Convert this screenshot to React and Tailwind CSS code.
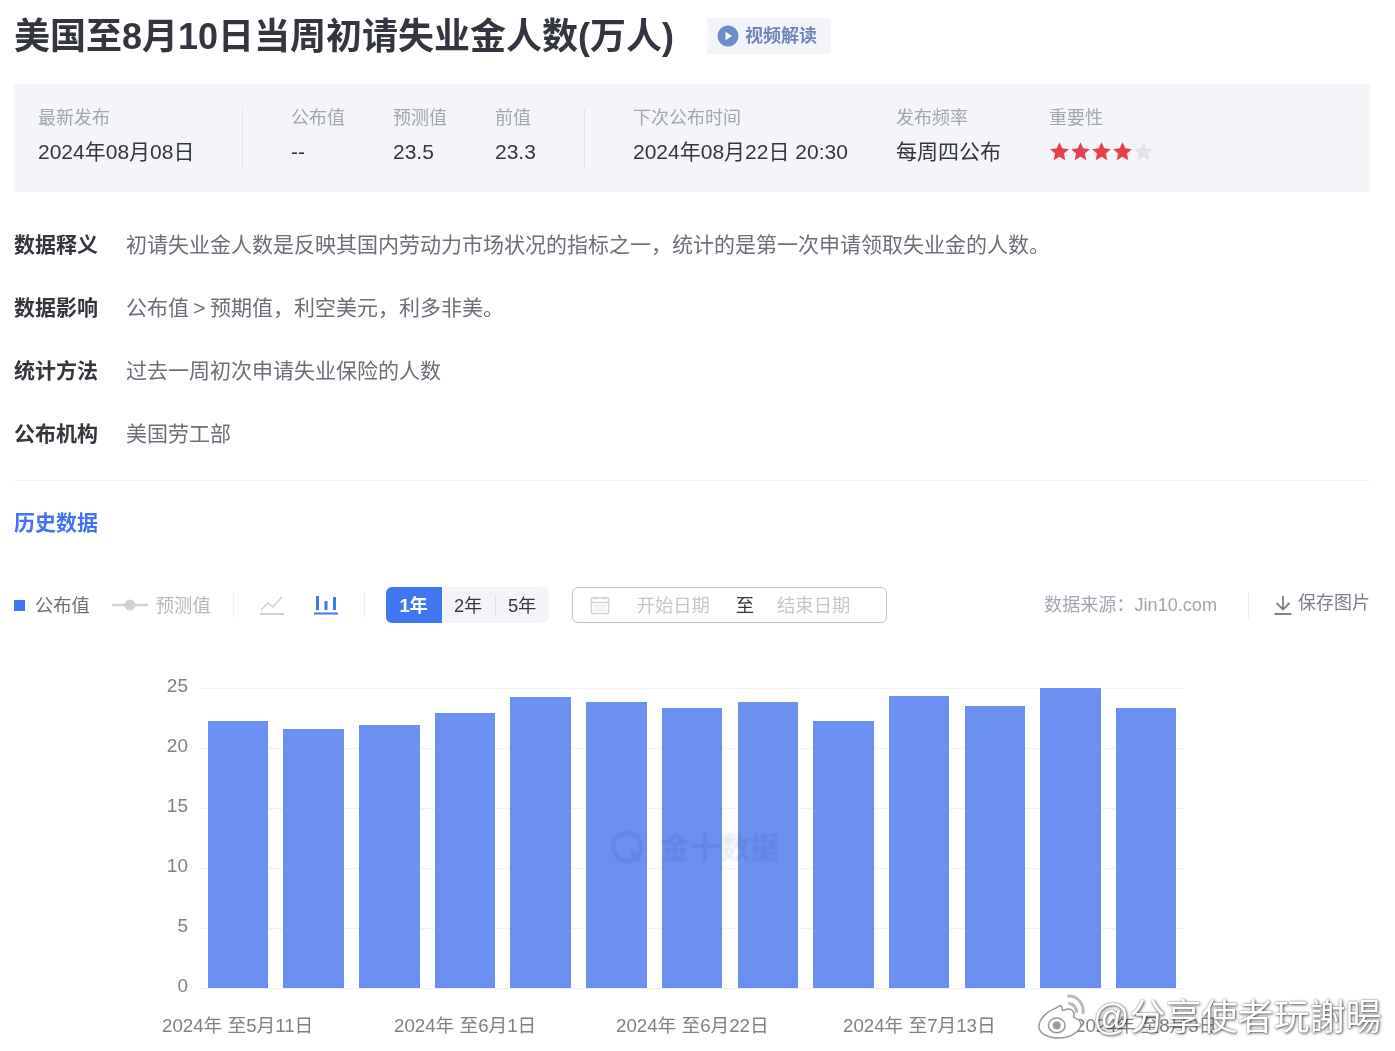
const sans = "font-['Liberation_Sans','Noto_Sans_CJK_SC',sans-serif]";

const Star = ({ on }) => (
  <svg viewBox="0 0 24 24" className="w-[21px] h-[21px]">
    <path d="M12 1.500l3.200 6.900 7.500.9-5.600 5.100 1.500 7.500L12 18.100l-6.600 3.800 1.500-7.500L1.300 9.300l7.500-.9z" fill={on ? "#e8404f" : "#e3e4e8"} />
  </svg>
);

const Stat = ({ label, value, className, children }) => (
  <div className={`pb-[5px] ${className}`}>
    <div className="text-[18px] leading-[26px] text-[#a2a6b0]">{label}</div>
    <div className="mt-[6px] h-[30px] text-[21px] leading-[30px] text-[#33363d]">{children || value}</div>
  </div>
);

const Row = ({ title, text }) => (
  <div className="flex h-[63px] items-center text-[21px] leading-[30px]">
    <div className="w-[112px] font-bold text-[#33363d]">{title}</div>
    <div className="text-[#6b6f78] [word-spacing:-1.5px]">{text}</div>
  </div>
);

const bars = [267, 259, 263, 275, 291, 286, 280, 286, 267, 292, 282, 300, 280];
const yLabels = [25, 20, 15, 10, 5, 0];
const xLabels = [
  ["2024年 至5月11日", "left-[148px]"],
  ["2024年 至6月1日", "left-[380px]"],
  ["2024年 至6月22日", "left-[602px]"],
  ["2024年 至7月13日", "left-[829px]"],
  ["2024年 至8月3日", "left-[1061px]"],
];

export default function App() {
  return (
    <div className={`${sans} w-[1395px] h-[1051px] overflow-hidden bg-white pl-[14px] pr-[25px] relative`}>
      <div className="flex h-[84px] items-start pt-[15px]">
        <h1 className="text-[36px] leading-[44px] font-bold text-[#33363f]">美国至8月10日当周初请失业金人数(万人)</h1>
        <div className="ml-[33px] mt-[3px] flex h-[36px] w-[124px] items-center gap-[6px] rounded-[2px] bg-[#f2f4f9] pl-[10px]">
          <svg viewBox="0 0 22 22" className="w-[22px] h-[22px]">
            <circle cx="11" cy="11" r="10.500" fill="#6f8cca" />
            <path d="M8.500 6.800l6.500 4.200-6.500 4.200z" fill="#fff" />
          </svg>
          <span className="mt-[1px] text-[18px] font-bold text-[#6f84b8]">视频解读</span>
        </div>
      </div>

      <div className="flex h-[108px] items-center bg-[#f4f5f8] pl-[24px] rounded-[2px]">
        <Stat label="最新发布" value="2024年08月08日" className="w-[204px]" />
        <div className="h-[60px] w-px bg-[#e4e6ea]" />
        <Stat label="公布值" value="--" className="w-[102px] ml-[48px]" />
        <Stat label="预测值" value="23.5" className="w-[102px]" />
        <Stat label="前值" value="23.3" className="w-[89px]" />
        <div className="h-[60px] w-px bg-[#e4e6ea]" />
        <Stat label="下次公布时间" value="2024年08月22日 20:30" className="w-[263px] ml-[48px]" />
        <Stat label="发布频率" value="每周四公布" className="w-[153px]" />
        <Stat label="重要性" className="ml-0">
          <div className="flex h-full items-center">
            <Star on /><Star on /><Star on /><Star on /><Star />
          </div>
        </Stat>
      </div>

      <div className="mt-[21px]">
        <Row title="数据释义" text="初请失业金人数是反映其国内劳动力市场状况的指标之一，统计的是第一次申请领取失业金的人数。" />
        <Row title="数据影响" text="公布值 > 预期值，利空美元，利多非美。" />
        <Row title="统计方法" text="过去一周初次申请失业保险的人数" />
        <Row title="公布机构" text="美国劳工部" />
      </div>

      <div className="mt-[15px] h-px bg-[#eff0f2]" />
      <div className="mt-[27px] text-[21px] leading-[30px] font-bold text-[#4074f4]">历史数据</div>

      <div className="mt-[49px] flex h-[36px] items-center text-[18.3px]">
        <span className="h-[11px] w-[11px] bg-[#3f76f3]" />
        <span className="ml-[10px] mt-[2px] text-[#6b6f78]">公布值</span>
        <svg viewBox="0 0 36 12" className="ml-[22px] w-[36px] h-[12px]">
          <path d="M0 6h36" stroke="#cfd1d6" strokeWidth="2.500" />
          <circle cx="18" cy="6" r="5.500" fill="#cfd1d6" />
        </svg>
        <span className="ml-[8px] mt-[2px] text-[#b4b7be]">预测值</span>
        <div className="ml-[22px] h-[26px] w-px bg-[#eceef1]" />
        <svg viewBox="0 0 24 20" className="ml-[26px] w-[24px] h-[20px]" fill="none" stroke="#cfd1d6" strokeWidth="1.600">
          <path d="M0 19h24" strokeWidth="2" />
          <path d="M1 15l7-7 5 4 9-10" />
        </svg>
        <svg viewBox="0 0 24 20" className="ml-[30px] w-[24px] h-[20px]" fill="#3f76f3">
          <rect x="2" y="1" width="3" height="14" />
          <rect x="10.500" y="6" width="3" height="9" />
          <rect x="19" y="2" width="3" height="13" />
          <rect x="0" y="17.500" width="24" height="2" />
        </svg>
        <div className="ml-[26px] h-[26px] w-px bg-[#eceef1]" />
        <div className="ml-[21px] flex h-[36px] items-center overflow-hidden rounded-[6px] bg-[#f2f4f8] text-[#33363d]">
          <div className="flex h-full w-[56px] items-center justify-center bg-[#3f76f3] pt-[2px] font-bold text-white">1年</div>
          <div className="flex h-full w-[53px] items-center justify-center pt-[2px]">2年</div>
          <div className="h-[20px] w-px bg-[#e1e3e8]" />
          <div className="flex h-full w-[53px] items-center justify-center pt-[2px]">5年</div>
        </div>
        <div className="ml-[23px] flex h-[36px] w-[315px] items-center rounded-[6px] border border-[#bfc3cb]">
          <svg viewBox="0 0 20 20" className="ml-[17px] w-[20px] h-[20px]" fill="none" stroke="#cfd1d6" strokeWidth="1.500">
            <rect x="1.500" y="3" width="17" height="15.500" rx="1" />
            <path d="M1.500 7.500h17M5.500 1v3.500M14.500 1v3.500" />
            <path d="M4.500 10.500h11M4.500 13h11M4.500 15.500h11" strokeDasharray="2 1" strokeWidth="1.200" />
          </svg>
          <span className="ml-[27px] mt-[2px] text-[#c4c7cd]">开始日期</span>
          <span className="ml-[26px] mt-[2px] text-[#33363d]">至</span>
          <span className="ml-[23px] mt-[2px] text-[#c4c7cd]">结束日期</span>
        </div>
        <span className="ml-auto mt-[2px] text-[18.1px] text-[#a2a6b0]">数据来源：Jin10.com</span>
        <div className="ml-[31px] h-[26px] w-px bg-[#e9eaee]" />
        <svg viewBox="0 0 18 20" className="ml-[25px] w-[18px] h-[20px]" fill="none" stroke="#7c8089" strokeWidth="1.800">
          <path d="M9 1v13M2.500 8L9 14.500 15.500 8M0.500 19h17" />
        </svg>
        <span className="ml-[6px] -mt-[3px] text-[18px] text-[#7c8089]">保存图片</span>
      </div>

      <div className="relative mt-[47px] h-[400px]">
        {/* y axis labels */}
        <div className="absolute left-0 top-[0] h-[300px] w-[1170px]">
          {yLabels.map((v, i) => (
            <div key={v} className="flex h-0 items-center" style={{ marginTop: i === 0 ? 18 : 60 }}>
              <span className="-mt-[4px] w-[174px] text-right text-[19px] text-[#7c8089]">{v}</span>
              <div className="ml-[12px] h-px w-[984px] bg-[#f0f1f3]" />
            </div>
          ))}
        </div>
        {/* bars */}
        <div className="absolute left-[193.7px] top-[18px] flex h-[300px] items-end gap-[15.2px]">
          {bars.map((h, i) => (
            <div key={i} className="w-[60.5px] bg-[#6a90f2]" style={{ height: h }} />
          ))}
        </div>
        {/* x labels */}
        {xLabels.map(([t, c]) => (
          <span key={t} className={`absolute top-[343px] text-[18.7px] leading-[26px] whitespace-nowrap text-[#7c8089] ${c}`}>{t}</span>
        ))}
      </div>

      {/* chart watermark */}
      <div className="absolute left-[610px] top-[830px] flex items-center gap-[14px] text-[30px] font-bold leading-[36px] text-[#e9ecf2] mix-blend-multiply blur-[1px]">
        <svg viewBox="0 0 36 36" className="w-[36px] h-[36px]" fill="none" stroke="#e9ecf2" strokeWidth="4">
          <circle cx="17" cy="17" r="14" />
          <path d="M20 21l10 10" />
        </svg>
        <span>金十数据</span>
      </div>

      {/* weibo watermark */}
      <div className="absolute left-[1036px] top-[994px] flex items-center gap-[5px] text-[36px] leading-[48px] whitespace-nowrap text-white [text-shadow:1px_1px_3px_rgba(0,0,0,0.65),0_0_2px_rgba(0,0,0,0.45)]">
        <svg viewBox="0 0 48 44" className="-mt-[5px] w-[52px] h-[46px]" fill="#fff" stroke="#9a9a9a" strokeWidth="1.500">
          <path d="M19 14c-10 4-17 11-17 18 0 7 9 11 19 11 11 0 21-6 21-13 0-5-6-6-7-7 2-6-3-9-8-7-3 1-3 1-3-2-1-3-3-2-5 0z" />
          <ellipse cx="19" cy="31" rx="8" ry="7" fill="none" />
          <circle cx="19" cy="31" r="3" fill="#9a9a9a" />
          <path d="M29 3c9-1 17 7 15 17M30 10c5 0 8 4 8 9" fill="none" strokeWidth="3" stroke="#bbb" />
        </svg>
        <span>@分享使者玩謝暘</span>
      </div>
    </div>
  );
}
